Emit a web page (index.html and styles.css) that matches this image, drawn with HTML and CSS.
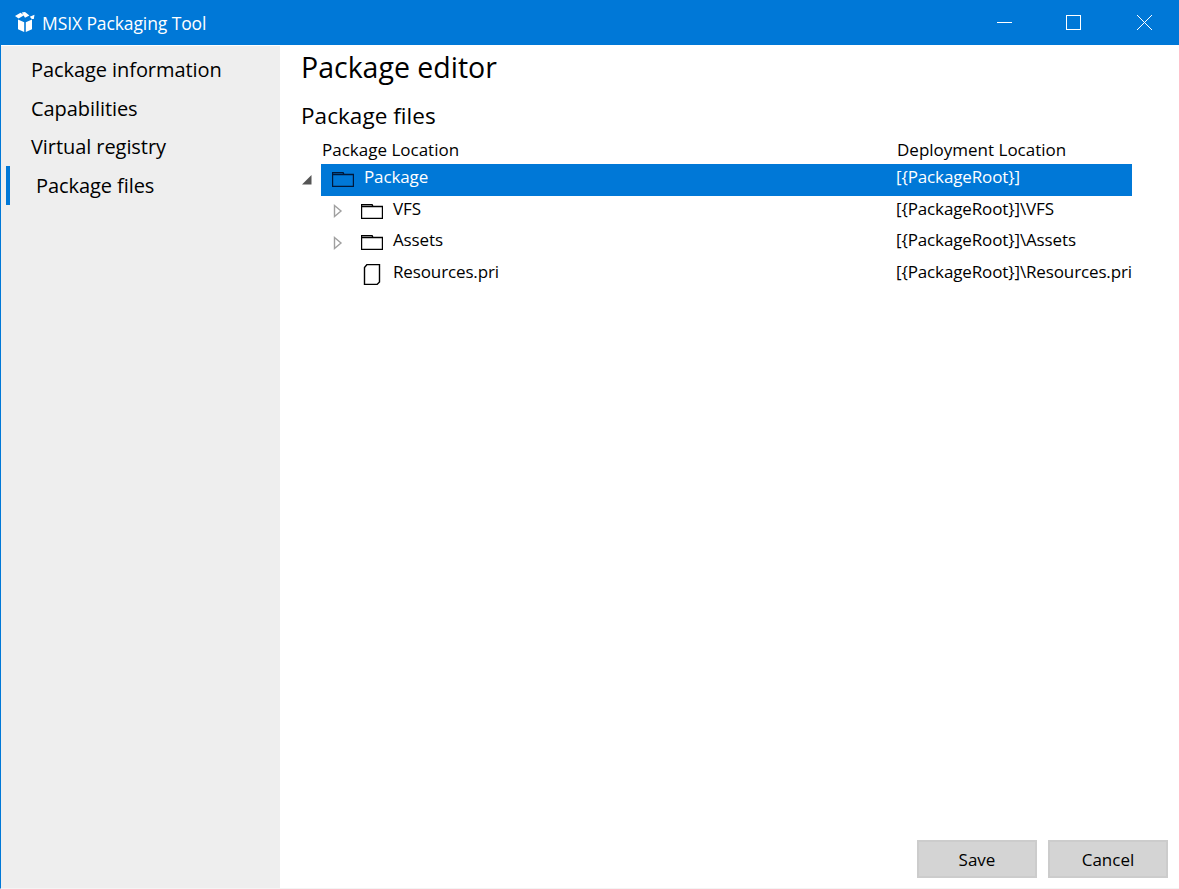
FILE: index.html
```html
<!DOCTYPE html>
<html lang="en">
<head>
    <meta charset="UTF-8">
    <title>MSIX Packaging Tool</title>
    <link rel="stylesheet" href="styles.css">
</head>
<body>
    <div class="window">
        <header class="titlebar">
            <svg class="app-icon" width="20" height="20" viewBox="0 0 20 20">
                <path d="M3 7.5 L9.2 10.2 V20 L3 17.3 Z M10.8 10.2 L17 7.5 V17.3 L10.8 20 Z" fill="#fff"/>
                <path d="M0 4 L5.5 0.8 L9 3.2 L3.6 6.4 Z M6.8 0.6 L10 0 L14.4 3.6 L10 5.8 Z M14.8 4.8 L19.5 2.8 L18.8 7 L16.8 7 Z" fill="#fff"/>
            </svg>
            <span class="app-title">MSIX Packaging Tool</span>
            <div class="window-buttons">
                <button class="win-btn"><svg width="15" height="15" viewBox="0 0 15 15"><path d="M0 7.5 H15" stroke="#fff" fill="none"/></svg></button>
                <button class="win-btn win-max"><svg width="15" height="15" viewBox="0 0 15 15"><rect x="0.5" y="0.5" width="14" height="14" stroke="#fff" fill="none"/></svg></button>
                <button class="win-btn"><svg width="15" height="15" viewBox="0 0 15 15"><path d="M0 0 L15 15 M15 0 L0 15" stroke="#fff" fill="none"/></svg></button>
            </div>
        </header>
        <div class="content">
            <nav class="sidebar">
                <a class="nav-item">Package information</a>
                <a class="nav-item">Capabilities</a>
                <a class="nav-item">Virtual registry</a>
                <a class="nav-item active">Package files</a>
            </nav>
            <main class="main">
                <h1 class="page-title">Package editor</h1>
                <h2 class="section-title">Package files</h2>
                <div class="tree">
                    <div class="tree-head">
                        <span class="col-name">Package Location</span>
                        <span class="col-deploy">Deployment Location</span>
                    </div>
                    <div class="tree-row">
                        <svg class="expander" width="20" height="12" viewBox="0 0 20 12"><path d="M1 10.5 H10.5 V1 Z" fill="#555"/></svg>
                        <div class="row-body selected">
                            <span class="col-name top-level">
                                <svg class="folder" width="22" height="15" viewBox="0 0 22 15"><path d="M0.5 14.5 V0.5 H11 L12 2.5 H21.5 V14.5 Z M0.5 2.5 H12" fill="none" stroke="#00183a" stroke-width="1.4"/></svg>
                                <span class="row-text">Package</span>
                            </span>
                            <span class="col-deploy row-text">[{PackageRoot}]</span>
                        </div>
                    </div>
                    <div class="tree-row">
                        <span class="expander-slot"></span>
                        <div class="row-body">
                            <span class="col-name child">
                                <svg class="expander" width="10" height="14" viewBox="0 0 10 14"><path d="M1.5 1.5 L8 7 L1.5 12.5 Z" fill="none" stroke="#a0a0a0" stroke-width="1.4"/></svg>
                                <svg class="folder" width="22" height="15" viewBox="0 0 22 15"><path d="M0.5 14.5 V0.5 H11 L12 2.5 H21.5 V14.5 Z M0.5 2.5 H12" fill="none" stroke="#000" stroke-width="1.4"/></svg>
                                <span class="row-text">VFS</span>
                            </span>
                            <span class="col-deploy row-text">[{PackageRoot}]\VFS</span>
                        </div>
                    </div>
                    <div class="tree-row">
                        <span class="expander-slot"></span>
                        <div class="row-body">
                            <span class="col-name child">
                                <svg class="expander" width="10" height="14" viewBox="0 0 10 14"><path d="M1.5 1.5 L8 7 L1.5 12.5 Z" fill="none" stroke="#a0a0a0" stroke-width="1.4"/></svg>
                                <svg class="folder" width="22" height="15" viewBox="0 0 22 15"><path d="M0.5 14.5 V0.5 H11 L12 2.5 H21.5 V14.5 Z M0.5 2.5 H12" fill="none" stroke="#000" stroke-width="1.4"/></svg>
                                <span class="row-text">Assets</span>
                            </span>
                            <span class="col-deploy row-text">[{PackageRoot}]\Assets</span>
                        </div>
                    </div>
                    <div class="tree-row">
                        <span class="expander-slot"></span>
                        <div class="row-body">
                            <span class="col-name child">
                                <span class="expander-blank"></span>
                                <svg class="folder" width="22" height="21" viewBox="0 0 22 21"><path d="M6 0.5 H18.5 V18 L16 20.5 H3.5 V3.5 Z" fill="none" stroke="#000" stroke-width="1.4"/></svg>
                                <span class="row-text">Resources.pri</span>
                            </span>
                            <span class="col-deploy row-text">[{PackageRoot}]\Resources.pri</span>
                        </div>
                    </div>
                </div>
                <div class="actions">
                    <button class="btn">Save</button>
                    <button class="btn">Cancel</button>
                </div>
            </main>
        </div>
    </div>
</body>
</html>
```

FILE: styles.css
```css
html, body {
    height: 100%;
    margin: 0;
}

body {
    font-family: "Open Sans", "Noto Sans", Arial, sans-serif;
    color: #000;
    background-color: #fff;
}

.window {
    display: flex;
    flex-direction: column;
    height: 100%;
    box-sizing: border-box;
    border-left: 1px solid #0078d7;
    border-bottom: 1px solid #f4f4f4;
}

.titlebar {
    display: flex;
    align-items: center;
    height: 45px;
    margin-left: -1px;
    padding-left: 15px;
    background-color: #0078d7;
    color: #fff;
    flex-shrink: 0;
}

.app-icon {
    margin-right: 7px;
    margin-top: -1px;
}

.app-title {
    padding-top: 1px;
    font-size: 17.5px;
    letter-spacing: -0.1px;
}

.window-buttons {
    display: flex;
    margin-left: auto;
}

.win-btn {
    display: flex;
    justify-content: center;
    align-items: center;
    width: 70px;
    height: 45px;
    padding: 0;
    border: 0;
    background: none;
}

.win-max {
    margin: 0 1px 0 -1px;
}

.content {
    flex: 1;
    display: flex;
    min-height: 0;
}

.sidebar {
    width: 279px;
    flex-shrink: 0;
    padding-top: 4px;
    margin-top: 1px;
    background-color: #eeeeee;
}

.nav-item {
    display: flex;
    align-items: center;
    height: 38.7px;
    padding-left: 30px;
    font-size: 20px;
    letter-spacing: -0.07px;
}

.nav-item.active {
    margin-left: 5px;
    padding-left: 26px;
    border-left: 4px solid #0078d7;
}

.main {
    flex: 1;
    display: flex;
    flex-direction: column;
    min-width: 0;
    padding: 0 11px 10px 21px;
}

.page-title {
    margin: 0;
    height: 47px;
    font-size: 28.5px;
    font-weight: 400;
    line-height: 45px;
}

.section-title {
    margin: 0;
    height: 44px;
    font-size: 22.5px;
    font-weight: 400;
    line-height: 48px;
    letter-spacing: 0.05px;
}

.tree {
    flex: 1;
    font-size: 17px;
}

.tree-head {
    display: flex;
    height: 28px;
    padding-left: 21px;
    line-height: 28px;
}

.tree-head .col-name {
    width: 575px;
}

.tree-row {
    display: flex;
    align-items: center;
    height: 31.5px;
}

.expander-slot,
.tree-row > .expander {
    flex-shrink: 0;
    width: 20px;
}

.row-body {
    flex: 1;
    display: flex;
    align-items: center;
    height: 100%;
    margin-right: 36px;
}

.row-body.selected {
    background-color: #0078d7;
    color: #fff;
}

.row-body .col-name {
    display: flex;
    align-items: center;
    width: 575px;
    flex-shrink: 0;
}

/* text sits a little above the icons, as in the WPF tree */
.row-text {
    padding-bottom: 6px;
    letter-spacing: -0.13px;
}

.top-level {
    padding-left: 11px;
    box-sizing: border-box;
}

.top-level .folder {
    margin-right: 10px;
}

.child {
    padding-left: 12px;
    box-sizing: border-box;
}

.child .expander,
.expander-blank {
    width: 10px;
    margin-right: 18px;
    flex-shrink: 0;
}

.child .folder {
    margin-right: 10px;
}

.col-deploy {
    white-space: nowrap;
    overflow: hidden;
}

.actions {
    display: flex;
    justify-content: flex-end;
    gap: 11px;
}

.btn {
    width: 120px;
    height: 38px;
    padding: 0;
    border: 2px solid #cccccc;
    background-color: #d4d4d4;
    color: #000;
    font-family: inherit;
    font-size: 17px;
}
```
